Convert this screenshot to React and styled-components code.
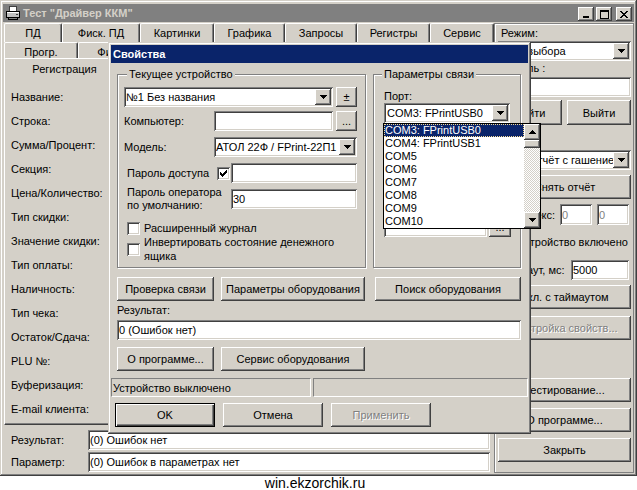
import React from 'react'
import styled, { createGlobalStyle, css } from 'styled-components'

const FACE = '#d4d0c8'
const NAVY = '#0a246a'

const raised = css`
  box-shadow: inset -1px -1px #404040, inset 1px 1px #fff,
    inset -2px -2px #808080, inset 2px 2px ${FACE};
`
const sunken = css`
  box-shadow: inset 1px 1px #808080, inset -1px -1px #fff,
    inset 2px 2px #404040, inset -2px -2px ${FACE};
`
const frame = css`
  box-shadow: inset -1px -1px #404040, inset 1px 1px ${FACE},
    inset -2px -2px #808080, inset 2px 2px #fff;
`

const GlobalStyle = createGlobalStyle`
  * { box-sizing: border-box; }
  html, body { margin: 0; padding: 0; background: #fff; }
  body {
    font-family: "Liberation Sans", Arial, sans-serif;
    font-size: 11px;
    color: #000;
  }
`

const Page = styled.div`
  position: relative;
  width: 637px;
  height: 490px;
  overflow: hidden;
  display: flex;
  flex-direction: column;
`

const Window = styled.div`
  flex: none;
  width: 637px;
  height: 476px;
  padding: 4px 3px 3px;
  background: ${FACE};
  ${frame}
  display: flex;
  flex-direction: column;
`

const TitleBar = styled.div`
  flex: none;
  height: 18px;
  display: flex;
  align-items: center;
  gap: 2px;
  padding: 0 2px;
  background: ${p => (p.$active ? NAVY : '#808080')};
  color: ${p => (p.$active ? '#fff' : FACE)};
  font-weight: bold;
  white-space: nowrap;
`

const TitleText = styled.span`
  flex: 1;
`

const CaptionButton = styled.div`
  flex: none;
  width: 16px;
  height: 14px;
  margin-top: 2px;
  margin-left: ${p => p.$ml || 0}px;
  background: ${FACE};
  ${raised}
  display: flex;
  align-items: center;
  justify-content: center;
`

const MainBody = styled.div`
  flex: 1;
  min-height: 0;
  display: flex;
  margin-top: 1px;
  padding-left: 1px;
`

const LeftColumn = styled.div`
  flex: none;
  width: 490px;
  display: flex;
  flex-direction: column;
`

const TabRow = styled.div`
  flex: none;
  height: ${p => p.$h}px;
  display: flex;
`

const Tab = styled.div`
  flex: none;
  position: relative;
  z-index: ${p => (p.$selected ? 2 : 0)};
  width: ${p => p.$w}px;
  height: ${p => (p.$selected ? p.$h + 3 : p.$h)}px;
  margin-top: ${p => (p.$selected ? -2 : 0)}px;
  background: ${FACE};
  border-top: 1px solid #fff;
  border-left: 1px solid #fff;
  border-right: 1px solid #404040;
  border-radius: 2px 2px 0 0;
  box-shadow: inset -1px 0 #808080;
  display: flex;
  align-items: center;
  justify-content: center;
  white-space: nowrap;
  overflow: hidden;
`

const TabPanel = styled.div`
  flex: 1;
  border-top: 1px solid #fff;
  border-left: 1px solid #fff;
  border-right: 1px solid #404040;
  border-bottom: 1px solid #404040;
  box-shadow: inset -1px -1px #808080;
  padding: 6px 6px 0;
  display: grid;
  grid-auto-rows: 24px;
  align-content: start;
  align-items: center;
`

const ResultArea = styled.div`
  flex: none;
  height: 48px;
  padding: 5px 4px 0 7px;
  display: grid;
  grid-template-columns: 77px 1fr;
  grid-auto-rows: 20px;
  row-gap: 2px;
  align-items: center;
`

const RightPanel = styled.div`
  flex: none;
  width: 140px;
  min-width: 0;
  border: 1px solid #808080;
  box-shadow: inset 1px 1px #fff;
  padding: 2px 2px 0 3px;
  display: flex;
  flex-direction: column;
`

const Row = styled.div`
  flex: none;
  display: flex;
  align-items: center;
  height: ${p => p.$h || 20}px;
  margin-top: ${p => p.$mt || 0}px;
  gap: ${p => p.$gap || 0}px;
  padding-right: ${p => p.$pr || 0}px;
`

const Label = styled.div`
  flex: ${p => (p.$grow ? 1 : 'none')};
  width: ${p => (p.$w ? `${p.$w}px` : 'auto')};
  margin-top: ${p => p.$mt || 0}px;
  padding-left: ${p => p.$pl || 0}px;
  line-height: ${p => p.$lh || 14}px;
  white-space: ${p => (p.$wrap ? 'normal' : 'nowrap')};
  text-align: ${p => p.$align || 'left'};
`

const Field = styled.div`
  flex: none;
  width: ${p => (p.$w ? `${p.$w}px` : 'auto')};
  height: ${p => p.$h || 20}px;
  margin-top: ${p => p.$mt || 0}px;
  margin-left: ${p => p.$ml || 0}px;
  background: #fff;
  ${sunken}
  padding: 0 2px;
  display: flex;
  align-items: center;
  white-space: nowrap;
  overflow: hidden;
  color: ${p => (p.$muted ? '#808080' : '#000')};
`

const ComboBox = styled.div`
  position: relative;
  flex: none;
  width: ${p => (p.$w ? `${p.$w}px` : 'auto')};
  height: 20px;
  margin-top: ${p => p.$mt || 0}px;
  background: #fff;
  ${sunken}
  padding: 2px;
  display: flex;
  align-items: center;
`

const ComboText = styled.div`
  flex: 1 1 0;
  min-width: 0;
  overflow: hidden;
  white-space: nowrap;
  padding-left: ${p => p.$pl || 0}px;
`

const DropButton = styled.div`
  flex: none;
  width: 16px;
  height: 16px;
  background: ${FACE};
  ${raised}
  display: flex;
  align-items: center;
  justify-content: center;
`

const Button = styled.button`
  flex: ${p => (p.$grow ? 1 : 'none')};
  width: ${p => (p.$w ? `${p.$w}px` : 'auto')};
  height: ${p => p.$h || 24}px;
  margin: ${p => p.$mt || 0}px 0 0 ${p => p.$ml || 0}px;
  padding: 0;
  border: none;
  background: ${FACE};
  font: inherit;
  line-height: 14px;
  white-space: nowrap;
  overflow: hidden;
  color: ${p => (p.$disabled ? '#808080' : '#000')};
  text-shadow: ${p => (p.$disabled ? '1px 1px #fff' : 'none')};
  ${p =>
    p.$default
      ? css`
          box-shadow: inset 0 0 0 1px #000, inset 2px 2px #fff,
            inset -2px -2px #404040, inset -3px -3px #808080;
        `
      : raised}
`

const CheckBoxBox = styled.div`
  flex: none;
  width: 13px;
  height: 13px;
  background: #fff;
  ${sunken}
  display: flex;
  align-items: center;
  justify-content: center;
`

const CheckLine = styled.div`
  flex: none;
  display: flex;
  align-items: center;
  gap: ${p => p.$gap || 4}px;
  margin-top: ${p => p.$mt || 0}px;
  padding-left: ${p => p.$pl || 0}px;
  min-height: 14px;
`

const Footer = styled.div`
  flex: none;
  height: 14px;
  padding-right: 7px;
  font-size: 14px;
  line-height: 14px;
  text-align: center;
`

const Dialog = styled.div`
  position: absolute;
  left: 108px;
  top: 42px;
  z-index: 5;
  width: 423px;
  height: 392px;
  padding: 3px;
  background: ${FACE};
  ${frame}
  display: flex;
  flex-direction: column;
`

const DialogBody = styled.div`
  flex: none;
  padding: 0 7px 0 6px;
  display: flex;
  flex-direction: column;
`

const GroupRow = styled.div`
  flex: none;
  display: flex;
  gap: 7px;
  margin-top: 5px;
`

const Group = styled.fieldset`
  flex: none;
  width: ${p => p.$w}px;
  height: 200px;
  min-width: 0;
  margin: 0;
  padding: 6px ${p => p.$pr}px 0 ${p => p.$pl}px;
  border: 1px solid #808080;
  box-shadow: inset 1px 1px #fff, 1px 1px #fff;
  display: flex;
  flex-direction: column;
`

const Legend = styled.legend`
  margin-left: ${p => p.$ml}px;
  padding: 0 2px;
  line-height: 13px;
  background: ${FACE};
`

const ButtonRow = styled.div`
  flex: none;
  display: flex;
  margin-top: ${p => p.$mt || 0}px;
  padding-left: ${p => p.$pl || 0}px;
  gap: ${p => p.$gap || 7}px;
`

const StatusBar = styled.div`
  flex: none;
  display: flex;
  gap: 2px;
  height: 19px;
  margin-top: 7px;
`

const StatusPane = styled.div`
  flex: none;
  width: ${p => p.$w}px;
  border-top: 1px solid #808080;
  border-left: 1px solid #808080;
  border-right: 1px solid #fff;
  border-bottom: 1px solid #fff;
  padding-left: 1px;
  display: flex;
  align-items: center;
  white-space: nowrap;
`

const DropList = styled.div`
  position: absolute;
  left: -1px;
  top: 20px;
  z-index: 10;
  width: 158px;
  height: 106px;
  border: 1px solid #000;
  background: #fff;
  display: flex;
`

const ListItems = styled.div`
  flex: 1;
  display: flex;
  flex-direction: column;
`

const ListItem = styled.div`
  flex: none;
  height: 13px;
  line-height: 11px;
  white-space: nowrap;
  background: ${p => (p.$selected ? NAVY : 'transparent')};
  color: ${p => (p.$selected ? '#fff' : '#000')};
  border: 1px ${p => (p.$selected ? 'dotted #f5db95' : 'solid transparent')};
`

const ScrollBar = styled.div`
  flex: none;
  width: 16px;
  display: flex;
  flex-direction: column;
`

const ScrollButton = styled.div`
  flex: none;
  height: 16px;
  background: ${FACE};
  ${raised}
  display: flex;
  align-items: center;
  justify-content: center;
`

const Thumb = styled.div`
  flex: none;
  height: 8px;
  background: ${FACE};
  ${raised}
`

const Track = styled.div`
  flex: 1;
  background: repeating-conic-gradient(#fff 0 25%, ${FACE} 0 50%) 0 0 / 2px 2px;
`

const Pixels = ({ w, h, rects }) => (
  <svg width={w} height={h} viewBox={`0 0 ${w} ${h}`} shapeRendering="crispEdges">
    {rects.map(([x, y, rw, rh = 1], i) => (
      <rect key={i} x={x} y={y} width={rw} height={rh} fill="#000" />
    ))}
  </svg>
)

const ArrowDown = () => <Pixels w={7} h={4} rects={[[0, 0, 7], [1, 1, 5], [2, 2, 3], [3, 3, 1]]} />
const ArrowUp = () => <Pixels w={7} h={4} rects={[[3, 0, 1], [2, 1, 3], [1, 2, 5], [0, 3, 7]]} />
const MinGlyph = () => <Pixels w={8} h={7} rects={[[1, 5, 6, 2]]} />
const MaxGlyph = () => (
  <Pixels w={9} h={9} rects={[[0, 0, 9, 2], [0, 2, 1, 7], [8, 2, 1, 7], [0, 8, 9, 1]]} />
)
const CloseGlyph = () => (
  <Pixels
    w={8}
    h={7}
    rects={[
      [0, 0, 2], [6, 0, 2],
      [1, 1, 2], [5, 1, 2],
      [2, 2, 4],
      [3, 3, 2],
      [2, 4, 4],
      [1, 5, 2], [5, 5, 2],
      [0, 6, 2], [6, 6, 2],
    ]}
  />
)
const CheckGlyph = () => (
  <Pixels
    w={7}
    h={7}
    rects={[
      [6, 0, 1],
      [5, 1, 2],
      [0, 2, 1], [4, 2, 3],
      [0, 3, 2], [3, 3, 3],
      [0, 4, 5],
      [1, 5, 3],
      [2, 6, 1],
    ]}
  />
)

const PrinterIcon = () => (
  <svg width="16" height="16" viewBox="0 0 16 16" shapeRendering="crispEdges">
    <path d="M4.5 1.5h7v5h-7z" fill="#fff" stroke="#404040" />
    <path d="M1.5 6.5h13v6h-13z" fill="#c0c0c0" stroke="#000" />
    <path d="M2 7h12v1H2z" fill="#fff" />
    <path d="M3.5 12.5h9v2h-9z" fill="#808080" stroke="#000" />
    <path d="M11 9h2v1h-2z" fill="#404040" />
  </svg>
)

const CheckBox = ({ checked }) => <CheckBoxBox>{checked && <CheckGlyph />}</CheckBoxBox>

const Combo = ({ w, mt, text, pl, children }) => (
  <ComboBox $w={w} $mt={mt}>
    <ComboText $pl={pl}>{text}</ComboText>
    <DropButton>
      <ArrowDown />
    </DropButton>
    {children}
  </ComboBox>
)

const row1Tabs = [
  ['ПД', 58],
  ['Фиск. ПД', 78],
  ['Картинки', 74],
  ['Графика', 71],
  ['Запросы', 72],
  ['Регистры', 73],
  ['Сервис', 64],
]
const row2Tabs = [
  ['Прогр.', 74],
  ['Фиск. память', 106],
  ['', 100],
  ['', 100],
  ['', 110],
]
const row3Tabs = [
  ['Регистрация', 121],
  ['', 120],
  ['', 120],
  ['', 129],
]

const panelLabels = [
  'Название:',
  'Строка:',
  'Сумма/Процент:',
  'Секция:',
  'Цена/Количество:',
  'Тип скидки:',
  'Значение скидки:',
  'Тип оплаты:',
  'Наличность:',
  'Тип чека:',
  'Остаток/Сдача:',
  'PLU №:',
  'Буферизация:',
  'E-mail клиента:',
]

const ports = ['COM3: FPrintUSB0', 'COM4: FPrintUSB1', 'COM5', 'COM6', 'COM7', 'COM8', 'COM9', 'COM10']

export default function App() {
  return (
    <>
      <GlobalStyle />
      <Page>
        <Window>
          <TitleBar>
            <PrinterIcon />
            <TitleText>Тест "Драйвер ККМ"</TitleText>
            <CaptionButton>
              <MinGlyph />
            </CaptionButton>
            <CaptionButton>
              <MaxGlyph />
            </CaptionButton>
            <CaptionButton $ml={2}>
              <CloseGlyph />
            </CaptionButton>
          </TitleBar>

          <MainBody>
            <LeftColumn>
              <TabRow $h={19}>
                {row1Tabs.map(([t, w]) => (
                  <Tab key={t} $w={w} $h={19}>{t}</Tab>
                ))}
              </TabRow>
              <TabRow $h={18}>
                {row2Tabs.map(([t, w], i) => (
                  <Tab key={i} $w={w} $h={18}>{t}</Tab>
                ))}
              </TabRow>
              <TabRow $h={18}>
                {row3Tabs.map(([t, w], i) => (
                  <Tab key={i} $w={w} $h={18} $selected={i === 0}>{t}</Tab>
                ))}
              </TabRow>
              <TabPanel>
                {panelLabels.map(l => (
                  <Label key={l}>{l}</Label>
                ))}
              </TabPanel>
              <ResultArea>
                <Label>Результат:</Label>
                <Field>(0) Ошибок нет</Field>
                <Label>Параметр:</Label>
                <Field>(0) Ошибок в параметрах нет</Field>
              </ResultArea>
            </LeftColumn>

            <RightPanel>
              <Label $pl={3}>Режим:</Label>
              <Combo mt={1} text="Реж. выбора" pl={1} />
              <Label $pl={3}>Пароль :</Label>
              <Field $mt={2} />
              <Row $mt={3} $h={25} $gap={5}>
                <Button $grow $h={25}>Войти</Button>
                <Button $grow $h={25}>Выйти</Button>
              </Row>
              <Combo mt={25} text="2: Z-отчёт с гашением" pl={9} />
              <Button $mt={5}>Снять отчёт</Button>
              <Row $mt={5} $h={21} $gap={5} $pr={2}>
                <Label $grow $align="right">Индекс:</Label>
                <Field $w={32} $h={21} $muted>0</Field>
                <Field $w={32} $h={21} $muted>0</Field>
              </Row>
              <CheckLine $mt={10} $pl={3}>
                <CheckBox />
                <Label>Устройство включено</Label>
              </CheckLine>
              <Row $mt={11} $h={20} $pr={2}>
                <Label $grow $pl={3}>Таймаут, мс:</Label>
                <Field $w={58}>5000</Field>
              </Row>
              <Button $mt={5}>Вкл. с таймаутом</Button>
              <Button $mt={7} $disabled>Настройка свойств...</Button>
              <Button $mt={38}>Тестирование...</Button>
              <Button $mt={6}>О программе...</Button>
              <Button $mt={6}>Закрыть</Button>
            </RightPanel>
          </MainBody>
        </Window>

        <Footer>win.ekzorchik.ru</Footer>

        <Dialog>
          <TitleBar $active>
            <TitleText>Свойства</TitleText>
          </TitleBar>

          <DialogBody>
            <GroupRow>
              <Group $w={249} $pl={6} $pr={8}>
                <Legend $ml={3}>Текущее устройство</Legend>
                <Row $gap={3}>
                  <Combo w={209} text="№1 Без названия" />
                  <Button $w={21} $h={20}>±</Button>
                </Row>
                <Row $mt={4}>
                  <Label $w={90}>Компьютер:</Label>
                  <Field $w={119} />
                  <Button $w={21} $h={20} $ml={3}>...</Button>
                </Row>
                <Row $mt={6}>
                  <Label $w={90}>Модель:</Label>
                  <Combo w={143} text="АТОЛ 22Ф / FPrint-22П1" />
                </Row>
                <Row $mt={6}>
                  <Label $w={93} $pl={3}>Пароль доступа</Label>
                  <CheckBox checked />
                  <Field $w={126} $ml={1} />
                </Row>
                <Row $mt={6}>
                  <Label $w={107} $pl={3} $lh={13}>
                    Пароль оператора
                    <br />
                    по умолчанию:
                  </Label>
                  <Field $w={126}>30</Field>
                </Row>
                <CheckLine $mt={12} $pl={3}>
                  <CheckBox />
                  <Label>Расширенный журнал</Label>
                </CheckLine>
                <CheckLine $pl={3}>
                  <CheckBox />
                  <Label $wrap $grow>
                    Инвертировать состояние денежного ящика
                  </Label>
                </CheckLine>
              </Group>

              <Group $w={148} $pl={10} $pr={9}>
                <Legend $ml={-2}>Параметры связи</Legend>
                <Label $mt={2}>Порт:</Label>
                <Combo w={126} text="COM3: FPrintUSB0" pl={1}>
                  <DropList>
                    <ListItems>
                      {ports.map((p, i) => (
                        <ListItem key={p} $selected={i === 0}>{p}</ListItem>
                      ))}
                    </ListItems>
                    <ScrollBar>
                      <ScrollButton>
                        <ArrowUp />
                      </ScrollButton>
                      <Thumb />
                      <Track />
                      <ScrollButton>
                        <ArrowDown />
                      </ScrollButton>
                    </ScrollBar>
                  </DropList>
                </Combo>
                <Row $mt={94} $gap={2}>
                  <Field $w={103} />
                  <Button $w={22} $h={20}>...</Button>
                </Row>
              </Group>
            </GroupRow>

            <ButtonRow $mt={9}>
              <Button $w={97}>Проверка связи</Button>
              <Button $w={144}>Параметры оборудования</Button>
              <Button $w={146} $ml={3}>Поиск оборудования</Button>
            </ButtonRow>
            <Label $mt={2}>Результат:</Label>
            <Field $mt={3}>0 (Ошибок нет)</Field>
            <ButtonRow $mt={7}>
              <Button $w={97}>О программе...</Button>
              <Button $w={144}>Сервис оборудования</Button>
            </ButtonRow>
          </DialogBody>

          <StatusBar>
            <StatusPane $w={200}>Устройство выключено</StatusPane>
            <StatusPane $w={215} />
          </StatusBar>

          <ButtonRow $mt={6} $pl={4} $gap={8}>
            <Button $w={100} $default>OK</Button>
            <Button $w={100}>Отмена</Button>
            <Button $w={100} $disabled>Применить</Button>
          </ButtonRow>
        </Dialog>
      </Page>
    </>
  )
}
